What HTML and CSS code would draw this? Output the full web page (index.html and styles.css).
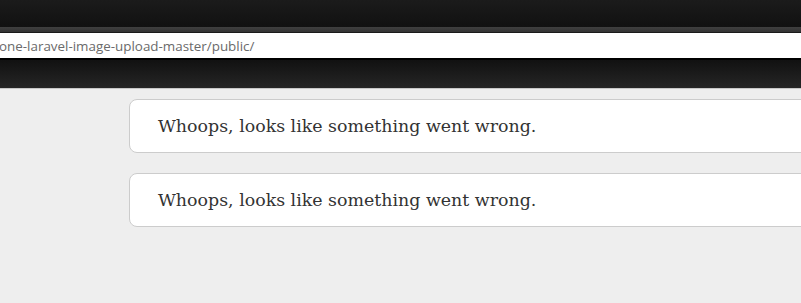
FILE: index.html
```html
<!DOCTYPE html>
<html>
<head>
<meta charset="utf-8">
<link rel="stylesheet" href="styles.css">
</head>
<body>
<div class="chrome">
  <div class="top"></div>
  <div class="band"></div>
  <div class="urlbar"><span class="url">one-laravel-image-upload-master/public/</span></div>
  <div class="bottom"></div>
</div>
<main class="content">
  <div class="card">Whoops, looks like something went wrong.</div>
  <div class="card">Whoops, looks like something went wrong.</div>
</main>
</body>
</html>
```
FILE: styles.css
```css
html, body {
  margin: 0;
  padding: 0;
  background: #eeeeee;
  overflow: hidden;
}
body {
  width: 801px;
  height: 303px;
}
.chrome {
  display: flex;
  flex-direction: column;
}
.top {
  height: 27px;
  background: linear-gradient(#1b1b1b, #111111);
}
.band {
  height: 5px;
  background: linear-gradient(#3f3f3f, #333333);
  border-bottom: 1px solid #1a1a1a;
}
.urlbar {
  height: 25px;
  background: #ffffff;
  border-bottom: 2px solid #000000;
  display: flex;
  align-items: center;
  overflow: hidden;
}
.url {
  font-family: "Open Sans", "Noto Sans", sans-serif;
  font-size: 13.4px;
  color: #6a6a6a;
  margin-left: -1px;
  white-space: nowrap;
}
.bottom {
  height: 28px;
  background: linear-gradient(#111111, #262626);
  border-bottom: 1px solid #c8c8c8;
}
.content {
  display: flex;
  flex-direction: column;
  gap: 20px;
  padding: 10px 0 0 129px;
}
.card {
  box-sizing: border-box;
  width: 700px;
  height: 54px;
  background: #ffffff;
  border: 1px solid #cccccc;
  border-radius: 8px;
  display: flex;
  align-items: center;
  padding-left: 28px;
  font-family: "DejaVu Serif", serif;
  font-size: 17.4px;
  color: #333333;
  white-space: nowrap;
}
```
